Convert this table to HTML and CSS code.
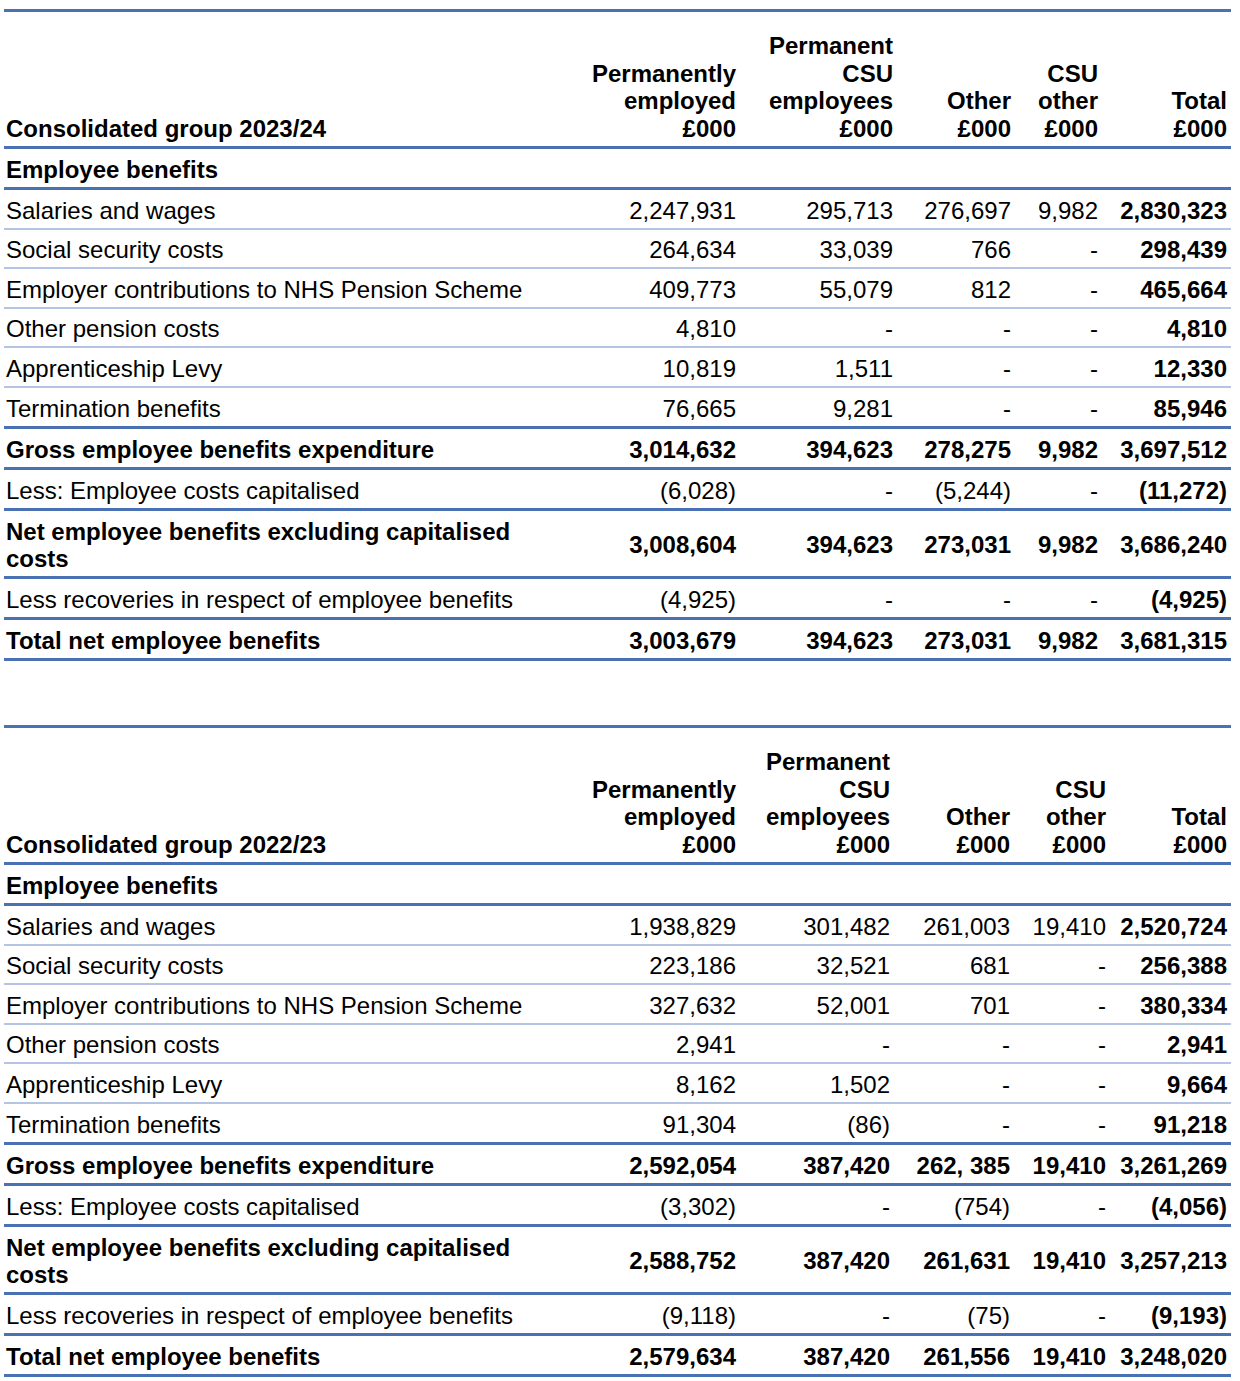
FILE: index.html
```html
<!DOCTYPE html>
<html lang="en">
<head>
<meta charset="utf-8">
<title>Employee benefits</title>
<link rel="stylesheet" href="styles.css">
</head>
<body>
<div class="page">
  <table class="fin t1">
    <colgroup>
      <col class="c-label"><col class="c-a"><col class="c-b"><col class="c-c"><col class="c-d"><col class="c-e">
    </colgroup>
    <thead>
      <tr>
        <th class="lbl">Consolidated group 2023/24</th>
        <th>Permanently<br>employed<br>£000</th>
        <th>Permanent<br>CSU<br>employees<br>£000</th>
        <th>Other<br>£000</th>
        <th>CSU<br>other<br>£000</th>
        <th>Total<br>£000</th>
      </tr>
    </thead>
    <tbody>
      <tr class="sec thick"><td class="lbl">Employee benefits</td><td></td><td></td><td></td><td></td><td></td></tr>
      <tr><td class="lbl">Salaries and wages</td><td>2,247,931</td><td>295,713</td><td>276,697</td><td>9,982</td><td class="tot">2,830,323</td></tr>
      <tr><td class="lbl">Social security costs</td><td>264,634</td><td>33,039</td><td>766</td><td>-</td><td class="tot">298,439</td></tr>
      <tr><td class="lbl">Employer contributions to NHS Pension Scheme</td><td>409,773</td><td>55,079</td><td>812</td><td>-</td><td class="tot">465,664</td></tr>
      <tr><td class="lbl">Other pension costs</td><td>4,810</td><td>-</td><td>-</td><td>-</td><td class="tot">4,810</td></tr>
      <tr><td class="lbl">Apprenticeship Levy</td><td>10,819</td><td>1,511</td><td>-</td><td>-</td><td class="tot">12,330</td></tr>
      <tr class="thick"><td class="lbl">Termination benefits</td><td>76,665</td><td>9,281</td><td>-</td><td>-</td><td class="tot">85,946</td></tr>
      <tr class="thick bold"><td class="lbl">Gross employee benefits expenditure</td><td>3,014,632</td><td>394,623</td><td>278,275</td><td>9,982</td><td>3,697,512</td></tr>
      <tr class="thick"><td class="lbl">Less: Employee costs capitalised</td><td>(6,028)</td><td>-</td><td>(5,244)</td><td>-</td><td class="tot">(11,272)</td></tr>
      <tr class="thick bold"><td class="lbl">Net employee benefits excluding capitalised<br>costs</td><td>3,008,604</td><td>394,623</td><td>273,031</td><td>9,982</td><td>3,686,240</td></tr>
      <tr class="thick"><td class="lbl">Less recoveries in respect of employee benefits</td><td>(4,925)</td><td>-</td><td>-</td><td>-</td><td class="tot">(4,925)</td></tr>
      <tr class="thick bold"><td class="lbl">Total net employee benefits</td><td>3,003,679</td><td>394,623</td><td>273,031</td><td>9,982</td><td>3,681,315</td></tr>
    </tbody>
  </table>

  <table class="fin t2">
    <colgroup>
      <col class="c-label"><col class="c-a"><col class="c-b"><col class="c-c"><col class="c-d"><col class="c-e">
    </colgroup>
    <thead>
      <tr>
        <th class="lbl">Consolidated group 2022/23</th>
        <th>Permanently<br>employed<br>£000</th>
        <th>Permanent<br>CSU<br>employees<br>£000</th>
        <th>Other<br>£000</th>
        <th>CSU<br>other<br>£000</th>
        <th>Total<br>£000</th>
      </tr>
    </thead>
    <tbody>
      <tr class="sec thick"><td class="lbl">Employee benefits</td><td></td><td></td><td></td><td></td><td></td></tr>
      <tr><td class="lbl">Salaries and wages</td><td>1,938,829</td><td>301,482</td><td>261,003</td><td>19,410</td><td class="tot">2,520,724</td></tr>
      <tr><td class="lbl">Social security costs</td><td>223,186</td><td>32,521</td><td>681</td><td>-</td><td class="tot">256,388</td></tr>
      <tr><td class="lbl">Employer contributions to NHS Pension Scheme</td><td>327,632</td><td>52,001</td><td>701</td><td>-</td><td class="tot">380,334</td></tr>
      <tr><td class="lbl">Other pension costs</td><td>2,941</td><td>-</td><td>-</td><td>-</td><td class="tot">2,941</td></tr>
      <tr><td class="lbl">Apprenticeship Levy</td><td>8,162</td><td>1,502</td><td>-</td><td>-</td><td class="tot">9,664</td></tr>
      <tr class="thick"><td class="lbl">Termination benefits</td><td>91,304</td><td>(86)</td><td>-</td><td>-</td><td class="tot">91,218</td></tr>
      <tr class="thick bold"><td class="lbl">Gross employee benefits expenditure</td><td>2,592,054</td><td>387,420</td><td>262, 385</td><td>19,410</td><td>3,261,269</td></tr>
      <tr class="thick"><td class="lbl">Less: Employee costs capitalised</td><td>(3,302)</td><td>-</td><td>(754)</td><td>-</td><td class="tot">(4,056)</td></tr>
      <tr class="thick bold"><td class="lbl">Net employee benefits excluding capitalised<br>costs</td><td>2,588,752</td><td>387,420</td><td>261,631</td><td>19,410</td><td>3,257,213</td></tr>
      <tr class="thick"><td class="lbl">Less recoveries in respect of employee benefits</td><td>(9,118)</td><td>-</td><td>(75)</td><td>-</td><td class="tot">(9,193)</td></tr>
      <tr class="thick bold"><td class="lbl">Total net employee benefits</td><td>2,579,634</td><td>387,420</td><td>261,556</td><td>19,410</td><td>3,248,020</td></tr>
    </tbody>
  </table>
</div>
</body>
</html>
```

FILE: styles.css
```css
html, body {
  margin: 0;
  padding: 0;
  background: #ffffff;
}

.page {
  padding: 9px 0 0 4px;
  font-family: "Liberation Sans", Arial, sans-serif;
  font-size: 24px;
  color: #000000;
}

.fin {
  width: 1227px;
  table-layout: fixed;
  border-collapse: separate;
  border-spacing: 0;
}

.t2 {
  margin-top: 64px;
}

.c-label { width: 578px; }
.t1 .c-a { width: 158px; }
.t1 .c-b { width: 157px; }
.t1 .c-c { width: 118px; }
.t1 .c-d { width: 87px; }
.t1 .c-e { width: 129px; }
.t2 .c-a { width: 158px; }
.t2 .c-b { width: 154px; }
.t2 .c-c { width: 120px; }
.t2 .c-d { width: 96px; }
.t2 .c-e { width: 121px; }

.fin th {
  font-weight: bold;
  text-align: right;
  vertical-align: bottom;
  line-height: 27.5px;
  padding: 20px 4px 4px 2px;
  border-top: 3px solid #4a71b4;
  border-bottom: 3px solid #4a71b4;
  white-space: nowrap;
}

.fin th.lbl {
  text-align: left;
}

.fin td {
  text-align: right;
  vertical-align: middle;
  line-height: 27.5px;
  padding: 6.75px 4px 3.25px 2px;
  border-bottom: 2px solid #b5c4e2;
  white-space: nowrap;
}

.fin td.lbl {
  text-align: left;
}

.fin tr.thick td {
  padding-top: 7px;
  padding-bottom: 3.5px;
  border-bottom: 3px solid #4a71b4;
}

.fin tr.sec td,
.fin tr.bold td,
.fin td.tot {
  font-weight: bold;
}
```
